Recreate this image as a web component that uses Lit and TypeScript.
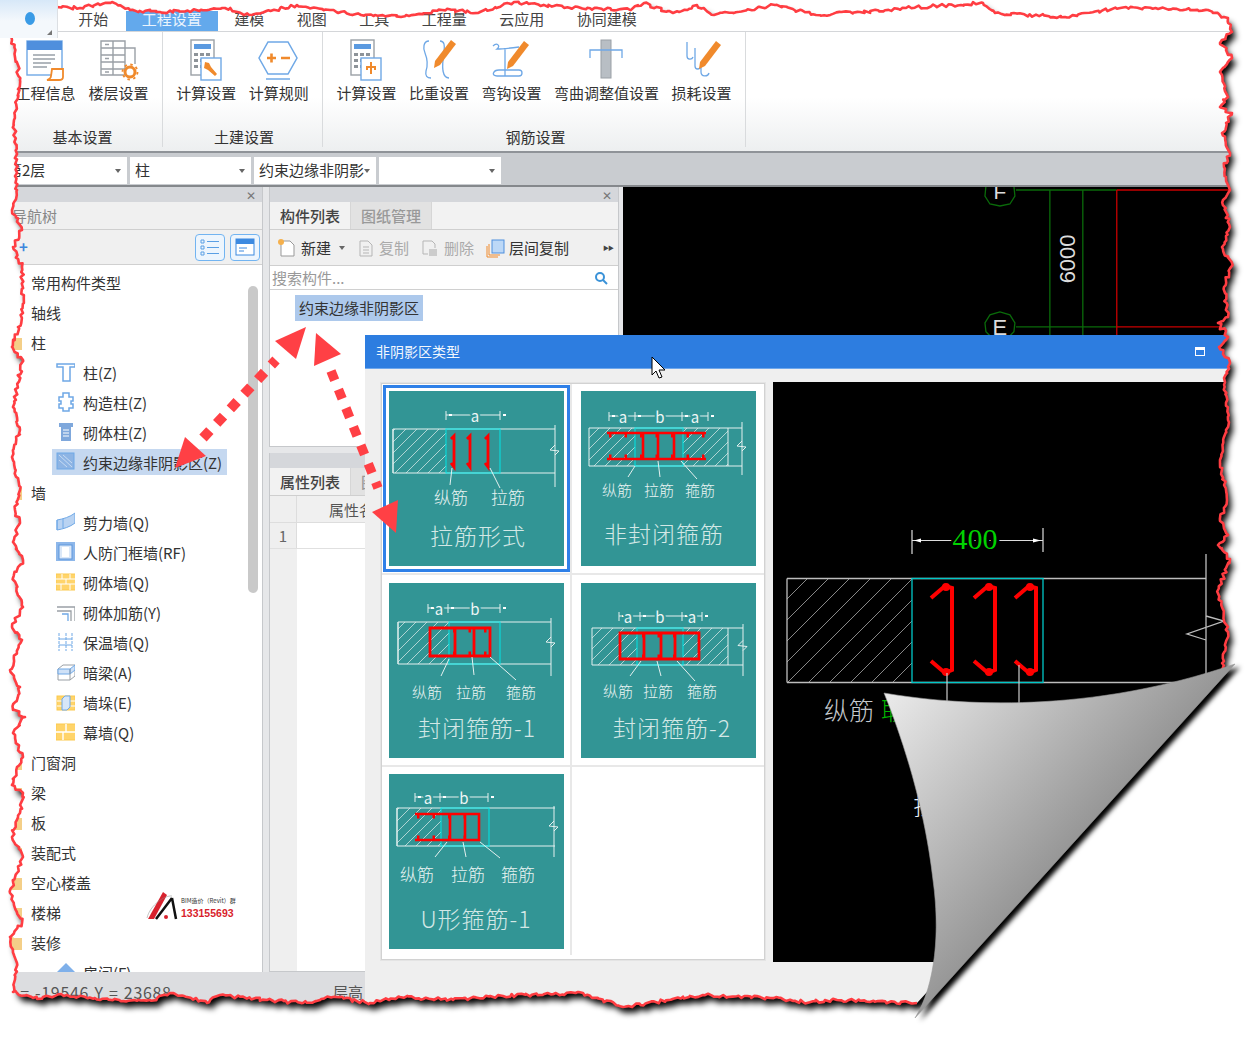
import { LitElement, css, html, svg } from "lit";
import { customElement } from "lit/decorators.js";

const BLUE = "#6fa8e6";
const ORANGE = "#f08a2c";
const GRAY = "#9aa0a6";

// ---- torn paper edge, key points read off the screenshot ----
const bottomEdge = [[917,1003],[837,1000],[803,1002],[770,998],[703,995],[623,1007],[583,993],[503,996],[453,1000],[400,997],[370,1003],[333,997],[303,1003],[267,1000],[220,995],[207,1003],[173,993],[150,1000],[100,1000],[67,995],[33,998],[17,993]];
const leftEdge = [[13,992],[17,963],[10,937],[22,923],[10,893],[17,873],[23,857],[12,837],[20,813],[23,793],[12,785],[17,767],[23,757],[13,733],[25,717],[13,710],[20,687],[10,670],[22,640],[12,627],[23,607],[13,578],[23,560],[13,542],[20,523],[15,510],[20,490],[12,457],[20,430],[13,407],[23,360],[12,347],[23,313],[22,267],[13,247],[22,230],[12,210],[17,190],[14,120],[20,80],[12,40],[12,23]];
const topEdge = [[25,12],[40,7],[80,8],[112,2],[130,10],[160,12],[225,8],[249,15],[297,5],[330,10],[361,15],[401,17],[442,10],[480,12],[514,2],[570,8],[630,10],[644,3],[673,13],[697,5],[714,15],[775,5],[816,15],[860,12],[906,8],[983,3],[995,13],[1065,17],[1126,7],[1208,10],[1228,18]];
const rightEdge = [[1232,32],[1220,43],[1232,58],[1220,72],[1228,97],[1220,107],[1232,113],[1222,133],[1230,153],[1224,167],[1230,190],[1223,200],[1230,227],[1222,247],[1232,263],[1224,287],[1228,317],[1218,323],[1228,337],[1219,347],[1230,363],[1224,378],[1228,420],[1220,460],[1227,500],[1220,521],[1228,535],[1218,545],[1230,559],[1218,590],[1228,632],[1222,670]];

let seed = 4711;
const rnd = () => {
  seed = (seed * 16807) % 2147483647;
  return seed / 2147483647;
};

function roughPath(pts: number[][]) {
  let d = `M${pts[0][0]} ${pts[0][1]}`;
  for (let i = 1; i < pts.length; i++) {
    const [ax, ay] = pts[i - 1];
    const [bx, by] = pts[i];
    const n = Math.max(1, Math.ceil(Math.hypot(bx - ax, by - ay) / 3));
    for (let j = 1; j <= n; j++) {
      const k = j / n;
      const jx = j === n ? 0 : (rnd() - 0.5) * 3.4;
      const jy = j === n ? 0 : (rnd() - 0.5) * 3.4;
      d += `L${(ax + (bx - ax) * k + jx).toFixed(1)} ${(ay + (by - ay) * k + jy).toFixed(1)}`;
    }
  }
  return d;
}

const EDGE = roughPath([...bottomEdge, ...leftEdge, ...topEdge, ...rightEdge]);
const CURL = "M884 693C960 706 1090 714 1235 664L915 1018C936 985 940 930 933 880C925 810 905 745 884 693Z";

// ---- ribbon icons ----
const pencil = (x: number, y: number) => svg`
  <path d="M${x} ${y}l5 4-16 21-6 3 1-7z" fill="${ORANGE}"/>`;
const calc = svg`
  <rect x="7" y="2" width="23" height="35" fill="#fff" stroke="${GRAY}" stroke-width="1.4"/>
  <rect x="10" y="6" width="17" height="5" fill="#5b9ae0"/>
  <path d="M10 15h4v3h-4zM16 15h4v3h-4zM22 15h4v3h-4zM10 21h4v3h-4zM16 21h4v3h-4zM10 27h4v3h-4zM16 27h4v3h-4z" fill="#8d9399"/>
  <rect x="17" y="20" width="20" height="22" fill="#fff" stroke="${BLUE}" stroke-width="1.4"/>`;

const RIBBON_ICONS: Record<string, unknown> = {
  info: svg`<rect x="4" y="3" width="35" height="34" fill="#fff" stroke="${BLUE}" stroke-width="1.4"/>
    <rect x="4" y="3" width="35" height="9" fill="#4f8fdd"/>
    <path d="M10 17h22M10 21h22M10 25h18M10 29h14" stroke="#98a0a8" stroke-width="1.4"/>
    <path d="M29 31h11v8c0 2-2 3-4 3h-12c3-1 4-2 4-4l1-7z" fill="#fff" stroke="${ORANGE}" stroke-width="1.8"/>`,
  floor: svg`<path d="M4 3h24v34H4zM4 10h24M4 17h24M4 24h24M4 31h24M16 3v34" fill="#fff" stroke="${GRAY}" stroke-width="1.4"/>
    <path d="M8 6.5h4M8 20.500h4M8 34h4" stroke="${GRAY}" stroke-width="1.4"/>
    <path d="M28 10h10v16" fill="none" stroke="${GRAY}" stroke-width="1.4"/>
    <circle cx="33" cy="34" r="5" fill="none" stroke="${ORANGE}" stroke-width="3"/>
    <circle cx="33" cy="34" r="7.500" fill="none" stroke="${ORANGE}" stroke-width="1.800" stroke-dasharray="2.500 3.400"/>`,
  calcTool: svg`${calc}<path d="M21 24l4 1 2 4 6 7-2 2-7-6-4-2z" fill="${ORANGE}"/>`,
  rule: svg`<path d="M11 4h20l9 16-9 16H11L2 20z" fill="#fff" stroke="${BLUE}" stroke-width="1.500"/>
    <path d="M10 20h9M14.500 15.500v9M24 20h9" stroke="${ORANGE}" stroke-width="2.600"/>
    <path d="M9 41h24" stroke="${BLUE}" stroke-width="1.500"/>`,
  calcPlus: svg`${calc}<path d="M27 24v12M22 29h10M23 29v3M31 29v3" stroke="${ORANGE}" stroke-width="2" fill="none"/>`,
  density: svg`<path d="M12 4c-6 0-6 8-4 12 2 5 3 12 1 18-1 5 1 7 5 7M23 4c6 0 4 8 4 12-1 6-2 12-1 18 1 5 3 7 6 7" transform="translate(0 -1)" fill="none" stroke="${BLUE}" stroke-width="1.300"/>${pencil(34, 2)}`,
  hook: svg`<path d="M4 8c4-4 8 0 4 3 6 0 22-2 22-2M16 10v28M8 38c-6 0-4-6 2-6h20c4 0 4 6 0 6z" fill="none" stroke="${BLUE}" stroke-width="1.300"/>${pencil(35, 3)}`,
  bend: svg`<rect x="16" y="2" width="10" height="38" fill="#b8bec4" stroke="#9aa0a6"/>
    <path d="M5 20v-8h32v8" fill="none" stroke="${BLUE}" stroke-width="1.300"/>`,
  loss: svg`<path d="M7 4v14c0 4 5 4 6 1M15 10v18c0 4 5 4 6 0M21 24v10c0 5 7 5 8 1" fill="none" stroke="${BLUE}" stroke-width="1.300"/>${pencil(36, 3)}`,
};

const RIBBON = [
  { name: "基本设置", items: [["工程信息", "info"], ["楼层设置", "floor"]] },
  { name: "土建设置", items: [["计算设置", "calcTool"], ["计算规则", "rule"]] },
  { name: "钢筋设置", items: [["计算设置", "calcPlus"], ["比重设置", "density"], ["弯钩设置", "hook"], ["弯曲调整值设置", "bend"], ["损耗设置", "loss"]] },
];

const TABS = ["开始", "工程设置", "建模", "视图", "工具", "工程量", "云应用", "协同建模"];

// ---- navigation tree ----
const Y = "#fbc94f";
const TREE_ICONS: Record<string, unknown> = {
  folder: svg`<path d="M1 4h6l2 2h8v12H1z" fill="#f4cf88"/>`,
  column: svg`<path d="M1 2h18v3H14v14H7V5H1z" fill="#fff" stroke="${BLUE}" stroke-width="1.500"/>`,
  struct: svg`<path d="M7 1h6v4h4v4h-2v3h2v4h-4v3H7v-3H3v-4h2V9H3V5h4z" fill="#fff" stroke="${BLUE}" stroke-width="1.500"/>`,
  masonry: svg`<path d="M3 1h14v4h-2v14H5V5H3z" fill="#7fa8dc"/><path d="M7 8h6M7 11h6M7 14h6" stroke="#fff"/>`,
  hatch: svg`<rect x="1" y="1" width="17" height="16" fill="#8db4e4" stroke="${BLUE}"/><path d="M3 3l13 12M7 3l9 8M3 8l8 7" stroke="#c7dbf3"/>`,
  shear: svg`<path d="M1 8c6-1 13-3 18-7v10c-5 4-12 6-18 7z" fill="#b9d3f2" stroke="${BLUE}"/><path d="M1 8v10M7 7v9" stroke="${BLUE}"/>`,
  frame: svg`<rect x="0" y="0" width="19" height="19" fill="#8db7ea"/><rect x="3" y="3" width="13" height="14" fill="#dbe8f8" stroke="#5e97dc"/><rect x="6" y="5" width="7" height="10" fill="#fff"/>`,
  brick: svg`<rect x="0" y="2" width="20" height="16" fill="#ffd46a" stroke="${Y}"/><path d="M0 7h20M0 12h20M6 2v5M14 2v5M10 7v5M5 12v6M14 12v6" stroke="#fff"/>`,
  corner: svg`<path d="M1 5h18v14M1 9h14v10" fill="none" stroke="${GRAY}" stroke-width="1.300"/><path d="M6 12h6v7" fill="none" stroke="${BLUE}" stroke-width="1.300"/>`,
  ladder: svg`<path d="M3 1v18M10 1v18M16 1v18" stroke="${BLUE}" stroke-dasharray="3 1"/><path d="M3 7h13M3 13h13" stroke="${BLUE}"/>`,
  beam: svg`<path d="M2 7l5-4h12v11l-5 4H2z" fill="#fff" stroke="${GRAY}"/><path d="M2 7h12v5H2zM14 7l5-4v5l-5 4z" fill="#cfe1f7" stroke="${BLUE}"/><path d="M14 7v11" stroke="${GRAY}"/>`,
  pier: svg`<rect x="1" y="4" width="18" height="14" fill="#ffd46a" stroke="${Y}"/><path d="M1 9h18M1 14h18" stroke="#fff"/><path d="M6 7l3-3h5v11l-3 3H6z" fill="#d7e6f8" stroke="${BLUE}"/>`,
  curtain: svg`<rect x="0" y="2" width="20" height="16" fill="#ffd46a" stroke="${Y}"/><path d="M0 10h20M10 2v8M7 10v8" stroke="#fff" stroke-width="1.400"/>`,
  room: svg`<path d="M10 1l9 9H1z" fill="#7fb0ea"/>`,
};

const TREE: [number, string, string, boolean?][] = [
  [0, "folder", "常用构件类型"], [0, "folder", "轴线"], [0, "folder", "柱"],
  [1, "column", "柱(Z)"], [1, "struct", "构造柱(Z)"], [1, "masonry", "砌体柱(Z)"], [1, "hatch", "约束边缘非阴影区(Z)", true],
  [0, "folder", "墙"],
  [1, "shear", "剪力墙(Q)"], [1, "frame", "人防门框墙(RF)"], [1, "brick", "砌体墙(Q)"], [1, "corner", "砌体加筋(Y)"],
  [1, "ladder", "保温墙(Q)"], [1, "beam", "暗梁(A)"], [1, "pier", "墙垛(E)"], [1, "curtain", "幕墙(Q)"],
  [0, "folder", "门窗洞"], [0, "folder", "梁"], [0, "folder", "板"], [0, "folder", "装配式"],
  [0, "folder", "空心楼盖"], [0, "folder", "楼梯"], [0, "folder", "装修"], [1, "room", "房间(F)"],
];

// ---- rebar type cards ----
interface Card {
  title: string; tx: number; ty: number; dimY: number; ticks: number[]; dims: [number, string][];
  box: number[]; right: number; vert: number[]; hatch: number[][]; cyan: number[]; inner?: number;
  leaders: number[][]; labels: [number, string][]; ly: number; ls: number; red: unknown;
}

const redLine = (d: string, w = 2.2, studs = "") => svg`
  <path d="${d}" fill="none" stroke="#f00" stroke-width="${w}"/>
  ${studs ? svg`<path d="${studs}" fill="none" stroke="#f00" stroke-width="5" stroke-dasharray="2.500 13"/>` : ""}`;

const CARDS: Card[] = [
  {
    title: "拉筋形式", tx: 89, ty: 144, dimY: 24, ticks: [57, 111], dims: [[86, "a"]],
    box: [4, 38, 82], right: 166, vert: [166, 34, 96], hatch: [[4, 57]], cyan: [57, 111],
    leaders: [[63, 77, 61, 94], [101, 77, 111, 97]], labels: [[62, "纵筋"], [119, "拉筋"]], ly: 105, ls: 17,
    red: redLine("M62 48l3-3v31l-3-4M78 48l3-3v31l-3-4M96 48l3-3v31l-3-4", 2.8),
  },
  {
    title: "非封闭箍筋", tx: 83, ty: 142, dimY: 25, ticks: [28, 54, 101, 127], dims: [[42, "a"], [79, "b"], [114, "a"]],
    box: [8, 37, 75], right: 161, vert: [161, 31, 84], hatch: [[8, 54], [102, 147]], cyan: [54, 102], inner: 147,
    leaders: [[54, 75, 47, 86], [77, 70, 79, 86], [100, 70, 116, 88]], labels: [[36, "纵筋"], [78, "拉筋"], [119, "箍筋"]], ly: 98, ls: 15,
    red: redLine("M26 42h99M26 68h99M62 42v26M77 42v26M93 42v26", 2.600, "M28 44h97M28 66h97"),
  },
  {
    title: "封闭箍筋-1", tx: 88, ty: 144, dimY: 25, ticks: [39, 59, 111], dims: [[50, "a"], [86, "b"]],
    box: [9, 39, 81], right: 162, vert: [162, 35, 93], hatch: [[9, 60]], cyan: [60, 111],
    leaders: [[60, 76, 52, 93], [83, 74, 85, 92], [101, 74, 127, 97]], labels: [[38, "纵筋"], [82, "拉筋"], [132, "箍筋"]], ly: 108, ls: 15,
    red: redLine("M41 45h60v28H41zM66 45v28M85 45v28", 2.800, "M64 47h34M64 71h34"),
  },
  {
    title: "封闭箍筋-2", tx: 91, ty: 144, dimY: 33, ticks: [38, 59, 101, 121], dims: [[47, "a"], [79, "b"], [111, "a"]],
    box: [11, 45, 82], right: 162, vert: [162, 41, 93], hatch: [[11, 56], [102, 147]], cyan: [56, 102], inner: 147,
    leaders: [[60, 78, 49, 93], [76, 78, 80, 93], [96, 78, 114, 98]], labels: [[37, "纵筋"], [77, "拉筋"], [121, "箍筋"]], ly: 107, ls: 15,
    red: redLine("M39 50h79v26H39zM63 50v26M80 50v26M94 50v26", 2.800, "M61 52h36M61 74h36"),
  },
  {
    title: "U形箍筋-1", tx: 87, ty: 144, dimY: 23, ticks: [26, 51, 99], dims: [[39, "a"], [75, "b"]],
    box: [8, 34, 72], right: 166, vert: [165, 32, 83], hatch: [[8, 52]], cyan: [52, 100],
    leaders: [[58, 68, 46, 83], [74, 68, 77, 83], [91, 68, 111, 84]], labels: [[28, "纵筋"], [79, "拉筋"], [129, "箍筋"]], ly: 99, ls: 17,
    red: redLine("M26 40h64v26H26M61 40v26M76 40v26", 2.600, "M28 42h60M28 64h60"),
  },
];

function cardSvg(c: Card) {
  const [x0, y0, y1] = c.box;
  const xv = c.vert[0];
  const my = (y0 + y1) / 2;
  return svg`
    <svg class="card-svg" viewBox="0 0 175 175" width="175" height="175">
      <defs>
        <pattern id="h${c.title}" width="11" height="11" patternUnits="userSpaceOnUse">
          <path d="M0 11L11 0" stroke="#cfe5e3" stroke-width=".8"/>
        </pattern>
      </defs>
      ${c.hatch.map(([a, b]) => svg`<rect x="${a}" y="${y0}" width="${b - a}" height="${y1 - y0}" fill="url(#h${c.title})"/>`)}
      <path d="M${x0} ${y0}H${c.right}M${x0} ${y1}H${c.right}M${x0} ${y0}V${y1}M${c.inner ?? x0} ${y0}V${y1}" stroke="#e4f0ef" stroke-width="1" fill="none"/>
      <path d="M${c.vert[0]} ${c.vert[1]}V${c.vert[2]}M${xv} ${my - 6}l-5 5 9 1-4 4" stroke="#e4f0ef" fill="none"/>
      <rect x="${c.cyan[0]}" y="${y0}" width="${c.cyan[1] - c.cyan[0]}" height="${y1 - y0}" fill="none" stroke="#00e6e6" stroke-width="1"/>
      ${c.red}
      ${c.leaders.map(([a, b, d, e]) => svg`<path d="M${a} ${b}L${d} ${e}" stroke="#e4f0ef"/>`)}
      <path d="M${c.ticks[0]} ${c.dimY}H${c.ticks[c.ticks.length - 1]}" stroke="#e4f0ef"/>
      ${c.ticks.map((t) => svg`<path d="M${t} ${c.dimY - 4}v9" stroke="#e4f0ef"/><rect x="${t + 3}" y="${c.dimY - 1}" width="3" height="2" fill="#fff"/>`)}
      ${c.dims.map(([x, t]) => svg`<text class="dim" x="${x}" y="${c.dimY}">${t}</text>`)}
      ${c.labels.map(([x, t]) => svg`<text class="lbl" x="${x}" y="${c.ly}" style="font-size:${c.ls}px">${t}</text>`)}
      <text class="ttl" x="${c.tx}" y="${c.ty}">${c.title}</text>
    </svg>`;
}

@customElement("app-root")
export class AppRoot extends LitElement {
  static styles = css`
    :host {
      display: block;
      width: 1260px;
      height: 1041px;
      font-family: "Noto Sans CJK SC", "Liberation Sans", sans-serif;
      font-size: 15px;
      color: #333;
    }
    * { box-sizing: border-box; }
    .page {
      position: relative;
      width: 1260px;
      height: 1041px;
      overflow: hidden;
      background: #fff;
      display: flex;
      flex-direction: column;
    }
    .tabs { height: 32px; display: flex; align-items: flex-end; border-bottom: 1px solid #d4d6d9; flex: none; }
    .appbtn { width: 58px; height: 38px; margin-bottom: -7px; margin-right: 4px; border-right: 1px solid #dcdfe3; background: linear-gradient(#d7e8f8, #f4f8fc 55%); position: relative; z-index: 1; }
    .appbtn i { position: absolute; left: 25px; top: 12px; width: 10px; height: 13px; border-radius: 50%; background: #3a9be6; }
    .appbtn b { position: absolute; right: 5px; bottom: 3px; border-left: 5px solid transparent; border-bottom: 5px solid #777; }
    .tab { height: 20px; line-height: 16px; padding: 0 16.250px; color: #444; white-space: nowrap; }
    .tab.on { background: #63a9ec; color: #eaf4fd; margin-left: 1px; }

    .ribbon { height: 121px; display: flex; flex: none; background: linear-gradient(#fff 55%, #edeff0); border-bottom: 2px solid #8f9398; }
    .group { display: flex; flex-direction: column; align-items: center; border-right: 1px solid #d9dbdd; margin-bottom: 4px; }
    .g0 { width: 163px; }
    .g1 { width: 160px; }
    .g2 { width: 423px; }
    .items { display: flex; gap: 12.500px; padding-top: 6px; height: 92px; }
    .g0 .items { gap: 13px; padding-left: 2px; }
    .item { display: flex; flex-direction: column; align-items: center; white-space: nowrap; }
    .item svg { display: block; }
    .item span { line-height: 20px; margin-top: 1px; }
    .gname { line-height: 20px; margin-top: 8px; margin-left: 3px; }

    .combos { height: 34px; flex: none; background: #c9ccd0; border-bottom: 2px solid #85888c; padding-top: 4px; display: grid; grid-template-columns: 127px 121px 122px 122px; gap: 3px; justify-content: start; align-items: start; }
    .combo { height: 27px; background: #fff; display: flex; align-items: center; justify-content: space-between; padding: 0 6px 0 5px; line-height: 25px; overflow: hidden; white-space: nowrap; }
    .combo span { margin-top: -2px; }
    .combo.first { padding-left: 7px; }
    .caret { border: 3.500px solid transparent; border-top: 4px solid #666; border-bottom: 0; flex: none; }

    .body { flex: 1; min-height: 0; display: flex; background: #e6e7e9; }
    .left { width: 263px; display: flex; flex-direction: column; background: #fff; border-right: 1px solid #c6c8cb; flex: none; }
    .phead { height: 15px; flex: none; background: #d5d7db; display: flex; justify-content: flex-end; align-items: center; padding-right: 6px; color: #777; font-size: 12px; line-height: 15px; }
    .ptitle { height: 28px; flex: none; background: #f0f0f0; color: #888; padding-left: 12px; line-height: 27px; border-bottom: 1px solid #cfcfcf; }
    .ptools { height: 35px; flex: none; background: #f0f0f0; border-bottom: 1px solid #d0d0d0; display: flex; justify-content: flex-end; align-items: center; gap: 5px; padding-right: 2px; position: relative; }
    .plus { position: absolute; left: 19px; top: 10px; color: #3c86dd; font-weight: 700; line-height: 14px; }
    .tbtn { width: 30px; height: 27px; border: 1px solid #72b4f1; border-radius: 4px; background: #edf5fd; display: flex; align-items: center; justify-content: center; }
    .tree { flex: 1; min-height: 0; overflow: hidden; position: relative; padding-top: 2px; }
    .node { height: 30px; display: flex; align-items: center; white-space: nowrap; }
    .node.l0 { padding-left: 5px; }
    .node.l0 svg { margin-right: 8px; }
    .node.l1 { padding-left: 56px; }
    .node.l1 svg { margin-right: 8px; }
    .node.sel { background: linear-gradient(#c5d8f0, #c5d8f0) 52px 2px / 175px 26px no-repeat; }
    .scroll { position: absolute; right: 4px; top: 21px; width: 10px; height: 307px; background: #c9c9c9; border-radius: 5px; }

    .mid { width: 350px; margin-left: 6px; display: flex; flex-direction: column; flex: none; gap: 6px; }
    .panel { background: #fff; display: flex; flex-direction: column; border: 1px solid #c6c8cb; border-top: 0; }
    .top { height: 260px; flex: none; }
    .low { flex: 1; min-height: 0; }
    .tabbar { height: 28px; flex: none; background: #f2f2f2; display: flex; border-bottom: 1px solid #cfcfcf; }
    .ptab { width: 81px; line-height: 27px; text-align: center; border-right: 1px solid #d6d6d6; font-weight: 500; color: #444; }
    .ptab.off { background: #e2e2e2; color: #999; }
    .bar { height: 36px; flex: none; background: #f0f0f0; border-bottom: 1px solid #cfcfcf; display: flex; align-items: center; padding-left: 7px; position: relative; white-space: nowrap; }
    .act { display: flex; align-items: center; gap: 4px; }
    .act.dis { color: #aaa; }
    .act.del { margin-left: 11px; }
    .act.copy { margin-left: 11px; }
    .bar .caret { margin: 0 12px 0 8px; }
    .more { position: absolute; right: 5px; font-size: 6px; color: #444; letter-spacing: -1px; }
    .search { height: 24px; flex: none; border-bottom: 1px solid #d0d0d0; display: flex; align-items: center; justify-content: space-between; padding: 0 10px 0 2px; color: #999; }
    .list { padding: 5px 0 0 25px; }
    .list span { display: inline-block; background: #adc9ec; line-height: 26px; padding: 0 4px; }
    .thead { height: 27px; flex: none; display: flex; background: #f0f0f0; border-bottom: 1px solid #ddd; }
    .num { width: 27px; flex: none; border-right: 1px solid #ddd; text-align: center; color: #666; line-height: 26px; background: #efefef; }
    .thead .cap { padding-left: 32px; line-height: 27px; color: #555; white-space: nowrap; }
    .trow { height: 26px; flex: none; display: flex; border-bottom: 1px solid #e0e0e0; }
    .tfill { flex: 1; min-height: 0; display: flex; }
    .tfill .num { height: 100%; border: 0; }

    .canvas { flex: 1; min-width: 0; margin-left: 4px; background: #000; }
    .canvas svg, .preview svg { display: block; }
    .cadtxt { fill: #dcdcdc; font-family: "Liberation Sans", sans-serif; }

    .status { height: 69px; flex: none; background: #dcdde0; display: flex; color: #555; padding-top: 7px; line-height: 26px; white-space: nowrap; overflow: hidden; }
    .status .xy { width: 333px; padding-left: 5px; font-size: 16px; letter-spacing: .7px; word-spacing: 1px; }

    .dialog { position: absolute; left: 365px; top: 335px; width: 895px; height: 706px; background: #efefef; display: flex; flex-direction: column; }
    .dtitle { height: 34px; flex: none; background: #2d7de0; border-bottom: 1px solid #6ea7ec; color: #f2f7fd; font-size: 14px; line-height: 33px; padding: 0 55px 0 11px; display: flex; justify-content: space-between; align-items: center; }
    .max { width: 10px; height: 9px; border: 1.500px solid #fff; border-top-width: 3px; }
    .dbody { display: flex; gap: 8px; padding: 14px 0 0 16px; }
    .grid { width: 384px; height: 577px; border: 1px solid #d2d2d2; outline: 1px solid #e4e4e4; background: #fff; display: grid; grid-template-columns: 190px 192px; grid-template-rows: 191px 192px 188px; flex: none; }
    .cell { display: flex; align-items: center; justify-content: center; border-right: 2px solid #e8e8e8; border-bottom: 2px solid #e8e8e8; }
    .cell.blank { border-right: 0; border-bottom: 0; }
    .cell.last { border-bottom: 0; }
    .cell.right { border-right: 0; }
    .pick { padding: 3px; border: 3px solid transparent; }
    .pick.sel { border-color: #2f80e8; }
    .card { width: 175px; height: 175px; background: #329595; }
    .card-svg { display: block; }
    .dim { fill: #eef6f5; font: 15px "Noto Sans CJK SC", sans-serif; text-anchor: middle; dominant-baseline: central; paint-order: stroke; stroke: #329595; stroke-width: 4px; }
    .lbl { fill: #e8f3f2; font-family: "Noto Sans CJK SC", sans-serif; font-weight: 300; text-anchor: middle; dominant-baseline: central; }
    .ttl { fill: #d3e8e6; font-family: "Noto Sans CJK SC", sans-serif; font-weight: 300; font-size: 23px; letter-spacing: 1px; text-anchor: middle; dominant-baseline: central; }
    .preview { width: 487px; height: 580px; background: #000; flex: none; margin-top: -1px; }
    .pvtxt { font-family: "Noto Sans CJK SC", sans-serif; font-weight: 300; font-size: 25px; }
    .overlay { position: absolute; inset: 0; pointer-events: none; }
    .wm1 { font: 6px "Noto Sans CJK SC", sans-serif; fill: #333; }
    .wm2 { font: 700 10.500px "Liberation Sans", sans-serif; fill: #d81e2c; }
  `;

  renderRibbon() {
    return html`
      <div class="ribbon">
        ${RIBBON.map((g, i) => html`
          <div class="group g${i}">
            <div class="items">
              ${g.items.map(([label, icon]) => html`
                <div class="item">
                  <svg width="44" height="44" viewBox="0 0 44 44">${RIBBON_ICONS[icon]}</svg>
                  <span>${label}</span>
                </div>`)}
            </div>
            <div class="gname">${g.name}</div>
          </div>`)}
      </div>`;
  }

  renderLeft() {
    return html`
      <div class="left">
        <div class="phead">✕</div>
        <div class="ptitle">导航树</div>
        <div class="ptools">
          <span class="plus">+</span>
          <div class="tbtn"><svg width="20" height="18" viewBox="0 0 20 18"><path d="M1 2h3v3H1zM1 8h3v3H1zM1 14h3v3H1z" fill="none" stroke="#5a9fe4"/><path d="M7 3.500h12M7 9.500h12M7 15.500h12" stroke="#5a9fe4"/></svg></div>
          <div class="tbtn"><svg width="20" height="18" viewBox="0 0 20 18"><rect x="1" y="1" width="18" height="16" fill="#fff" stroke="#3d8ae0"/><rect x="1" y="1" width="18" height="5" fill="#3d8ae0"/><path d="M4 10h8M4 13h5" stroke="#3d8ae0"/></svg></div>
        </div>
        <div class="tree">
          ${TREE.map(([lvl, icon, label, sel]) => html`
            <div class="node l${lvl} ${sel ? "sel" : ""}">
              <svg width="${lvl ? 19 : 18}" height="20" viewBox="0 0 ${lvl ? 19 : 18} 20">${TREE_ICONS[icon]}</svg>
              <span>${label}</span>
            </div>`)}
          <div class="scroll"></div>
        </div>
      </div>`;
  }

  renderMid() {
    return html`
      <div class="mid">
        <div class="panel top">
          <div class="phead">✕</div>
          <div class="tabbar"><div class="ptab">构件列表</div><div class="ptab off">图纸管理</div></div>
          <div class="bar">
            <div class="act"><svg width="20" height="20" viewBox="0 0 20 20"><path d="M4 3h9l4 4v11H4z" fill="#fff" stroke="#999"/><circle cx="4" cy="4" r="3" fill="#f5b04c"/></svg><span>新建</span></div>
            <i class="caret"></i>
            <div class="act dis"><svg width="18" height="20" viewBox="0 0 18 20"><path d="M3 3h8l4 4v11H3zM6 9h6M6 12h6M6 15h6" fill="none" stroke="#b5b5b5"/></svg><span>复制</span></div>
            <div class="act dis del"><svg width="20" height="20" viewBox="0 0 20 20"><path d="M3 3h9l3 3v4M3 3v13h5" fill="none" stroke="#b5b5b5"/><rect x="9" y="11" width="8" height="7" fill="#ccc"/></svg><span>删除</span></div>
            <div class="act copy"><svg width="20" height="20" viewBox="0 0 20 20"><path d="M2 8v11h11M4 6v11h11" fill="none" stroke="${ORANGE}"/><rect x="7" y="2" width="12" height="13" fill="#bcd8f7" stroke="#4f8fdd"/></svg><span>层间复制</span></div>
            <span class="more">▶▶</span>
          </div>
          <div class="search"><span>搜索构件...</span><svg width="14" height="14" viewBox="0 0 14 14"><circle cx="6" cy="6" r="4" fill="none" stroke="#3a92d8" stroke-width="2"/><path d="M9 9l4 4" stroke="#3a92d8" stroke-width="2"/></svg></div>
          <div class="list"><span>约束边缘非阴影区</span></div>
        </div>
        <div class="panel low">
          <div class="phead"></div>
          <div class="tabbar"><div class="ptab">属性列表</div><div class="ptab off">图层管理</div></div>
          <div class="thead"><div class="num"></div><div class="cap">属性名称</div></div>
          <div class="trow"><div class="num">1</div></div>
          <div class="tfill"><div class="num"></div></div>
        </div>
      </div>`;
  }

  renderCanvas() {
    const green = "#0a6a0a";
    return html`
      <div class="canvas">
        <svg width="637" height="784" viewBox="623 187 637 785">
          <path d="M1016 190H1117M1050 190V340M1083 190V340M1016 327H1117" stroke="${green}" stroke-width="1.300" fill="none"/>
          <path d="M1117 190H1260M1117 190V340M1117 327H1260" stroke="#c80000" stroke-width="1.300" fill="none"/>
          <path d="M993 180l-7 6-1 10 5 8 10 2 10-2 5-8-1-10-7-6M1000 312l-10 3-5 8 1 9 6 6 8 2 8-2 6-6 1-9-5-8z" fill="none" stroke="${green}" stroke-width="1.300"/>
          <text class="cadtxt" x="1000" y="199" font-size="21" text-anchor="middle">F</text>
          <text class="cadtxt" x="1000" y="335" font-size="22" text-anchor="middle">E</text>
          <text class="cadtxt" font-size="22" text-anchor="middle" transform="translate(1075 259) rotate(-90)">6000</text>
        </svg>
      </div>`;
  }

  renderDialog() {
    const cells = CARDS.map((c, i) => html`
      <div class="cell ${i % 2 ? "right" : ""} ${i === 4 ? "last" : ""}">
        <div class="pick ${i === 0 ? "sel" : ""}"><div class="card">${cardSvg(c)}</div></div>
      </div>`);
    const hook = (x: number) => svg`
      <path d="M${x} 598L${x + 14} 586L${x + 21} 588V670L${x + 14} 673L${x} 661" fill="none" stroke="#f00" stroke-width="4"/>
      <circle cx="${x + 15}" cy="587" r="4" fill="#f00"/><circle cx="${x + 15}" cy="672" r="4" fill="#f00"/>`;
    return html`
      <div class="dialog">
        <div class="dtitle"><span>非阴影区类型</span><i class="max"></i></div>
        <div class="dbody">
          <div class="grid">${cells}<div class="cell blank"></div></div>
          <div class="preview">
            <svg width="487" height="580" viewBox="773 382 487 580">
              <defs><pattern id="ph" width="21" height="21" patternUnits="userSpaceOnUse"><path d="M0 21L21 0" stroke="#aaa" stroke-width=".8"/></pattern></defs>
              <rect x="787" y="578.500" width="125" height="104" fill="url(#ph)"/>
              <path d="M787 578.500H1206M787 682.500H1206M787 578.500V682.500M1206 554V676M1206 616L1224 621L1187 634L1206 640" fill="none" stroke="#bdbdbd" stroke-width="1.300"/>
              <rect x="912" y="578.500" width="131" height="104" fill="none" stroke="#00c8c8" stroke-width="1.300"/>
              ${hook(931)}${hook(974)}${hook(1015)}
              <path d="M947 673V705M1019 665V705" stroke="#ccc" stroke-width="1.200"/>
              <path d="M912 530V554M1043 528V552M912 540.500H1043" stroke="#ddd" stroke-width="1.200"/>
              <path d="M914 540.500l7-2v4zM1041 540.500l-8-2v4z" fill="#fff"/>
              <text x="975" y="549" text-anchor="middle" font-family="Liberation Serif, serif" font-size="30" fill="#00d200" stroke="#000" stroke-width="6" paint-order="stroke">400</text>
              <text class="pvtxt" x="824" y="720" fill="#c4c8cc">纵筋</text>
              <text class="pvtxt" x="881" y="720" fill="#00b400">取</text>
              <text class="pvtxt" x="913" y="815" fill="#e8eef5" font-size="32">拉筋形式</text>
            </svg>
          </div>
        </div>
      </div>`;
  }

  renderOverlay() {
    const head = (p: string) => svg`<path d="${p}" fill="#ff4045"/>`;
    return svg`
      <svg class="overlay" width="1260" height="1041" viewBox="0 0 1260 1041">
        <defs>
          <filter id="bl" x="-5%" y="-5%" width="110%" height="110%"><feGaussianBlur stdDeviation="3"/></filter>
          <filter id="bl2" x="-10%" y="-10%" width="120%" height="120%"><feGaussianBlur stdDeviation="2.500"/></filter>
          <clipPath id="outside"><path clip-rule="evenodd" d="M0 0H1260V1041H0Z ${EDGE}Z"/></clipPath>
          <linearGradient id="curl" gradientUnits="userSpaceOnUse" x1="890" y1="700" x2="1090" y2="880">
            <stop offset="0" stop-color="#e8e8e8"/><stop offset="1" stop-color="#8a8a8a"/>
          </linearGradient>
        </defs>
        <!-- callout arrows and watermark sit under the paper effects -->
        <g>
          <path d="M203 438L276 360" stroke="#ff4045" stroke-width="10" stroke-dasharray="10 10"/>
          <path d="M331 371L378 488" stroke="#ff4045" stroke-width="9.500" stroke-dasharray="10 10"/>
          ${head("M306 327L275 341L296 359Z")}
          ${head("M175 468L185 437L206 456Z")}
          ${head("M316 333L314 366L341 354Z")}
          ${head("M396 533L398 500L372 512Z")}
        </g>
        <g>
          <path d="M148 919L163 892L167 895L154 919Z" fill="#d8222e"/>
          <path d="M172 898L156 919M172 898L176 919" stroke="#111" stroke-width="2.500" fill="none"/>
          <circle cx="166" cy="917" r="2" fill="#d8222e"/>
          <path d="M147 918C150 905 165 895 172 896" fill="none" stroke="#888" stroke-width=".5"/>
          <text class="wm1" x="181" y="903">BIM造价（Revit）群</text>
          <text class="wm2" x="181" y="917">133155693</text>
        </g>
        <path d="M652 357v18l4-4 3 7 3-1-3-7h6z" fill="#fff" stroke="#000"/>

        <path fill="#fff" fill-rule="evenodd" d="M0 0H1260V1041H0Z ${EDGE}Z"/>
        <g clip-path="url(#outside)">
          <path d="${EDGE}Z" fill="#000" filter="url(#bl)" transform="translate(4 6)"/>
        </g>
        <path d="${EDGE}" fill="none" stroke="#ff3d42" stroke-width="2.600" stroke-linejoin="round"/>
        <path d="${CURL}" fill="#000" filter="url(#bl2)" transform="translate(5 3)"/>
        <path d="${CURL}" fill="url(#curl)" stroke="#9a9a9a" stroke-width=".6"/>
      </svg>`;
  }

  render() {
    return html`
      <div class="page">
        <div class="tabs">
          <div class="appbtn"><i></i><b></b></div>
          ${TABS.map((t) => html`<div class="tab ${t === "工程设置" ? "on" : ""}">${t}</div>`)}
        </div>
        ${this.renderRibbon()}
        <div class="combos">
          <div class="combo first"><span>第2层</span><i class="caret"></i></div>
          <div class="combo"><span>柱</span><i class="caret"></i></div>
          <div class="combo"><span>约束边缘非阴影</span><i class="caret"></i></div>
          <div class="combo"><span></span><i class="caret"></i></div>
        </div>
        <div class="body">
          ${this.renderLeft()}
          ${this.renderMid()}
          ${this.renderCanvas()}
        </div>
        <div class="status"><div class="xy">X = -19546 Y = 23688</div><div>层高</div></div>
        ${this.renderDialog()}
        ${this.renderOverlay()}
      </div>`;
  }
}
